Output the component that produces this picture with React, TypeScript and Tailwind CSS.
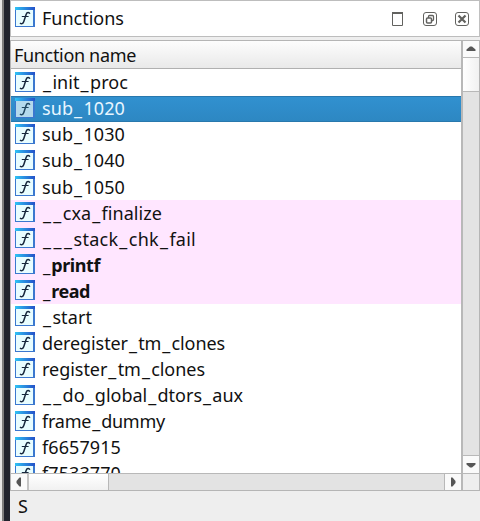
import React from "react";

type Row = { name: string; width: number; kind?: "selected" | "library" | "import" };

const rows: Row[] = [
  { name: "_init_proc", width: 86 },
  { name: "sub_1020", width: 83, kind: "selected" },
  { name: "sub_1030", width: 83 },
  { name: "sub_1040", width: 83 },
  { name: "sub_1050", width: 83 },
  { name: "__cxa_finalize", width: 120, kind: "library" },
  { name: "___stack_chk_fail", width: 154, kind: "library" },
  { name: "_printf", width: 58, kind: "import" },
  { name: "_read", width: 48, kind: "import" },
  { name: "_start", width: 50 },
  { name: "deregister_tm_clones", width: 183 },
  { name: "register_tm_clones", width: 163 },
  { name: "__do_global_dtors_aux", width: 201 },
  { name: "frame_dummy", width: 123 },
  { name: "f6657915", width: 79 },
  { name: "f7533770", width: 79 },
];

function FunctionIcon({ selected = false }: { selected?: boolean }) {
  return (
    <svg width="20" height="20" viewBox="0 0 20 20" className="block shrink-0">
      <defs>
        <linearGradient id="icon-bar" x1="0" x2="1" y1="0" y2="0">
          <stop offset="0" stopColor="#2fc4f5" />
          <stop offset="1" stopColor="#2450c8" />
        </linearGradient>
      </defs>
      <rect width="20" height="20" fill="#3b78cf" />
      <rect width="20" height="3" fill="url(#icon-bar)" />
      <rect x="1" y="3" width="17" height="16" fill={selected ? "#b3d9ec" : "#e8fdff"} />
      <g fill="none" stroke={selected ? "#1f4660" : "#17283d"}>
        <path d="M14.8 6.8C14.2 5 12 5.1 11.2 7.2L8.8 14.6C8.1 16.9 6.4 17.3 5 16" strokeWidth="1.5" />
        <path d="M6.8 9.5H13.6" strokeWidth="1" />
      </g>
    </svg>
  );
}

function FittedText({ text, width }: { text: string; width: number }) {
  const ref = React.useRef<HTMLSpanElement>(null);
  const [spacing, setSpacing] = React.useState(0);
  React.useLayoutEffect(() => {
    if (ref.current) setSpacing((width - ref.current.getBoundingClientRect().width) / text.length);
  }, [text, width]);
  return (
    <span ref={ref} className="inline-block whitespace-pre" style={{ letterSpacing: spacing }}>
      {text.split(/(_)/).map((part, i) =>
        part === "_" ? <span key={i} className="ml-[1px] mr-[1.3px]">_</span> : part
      )}
    </span>
  );
}

function Arrow({ direction }: { direction: "up" | "down" | "left" | "right" }) {
  const paths = {
    up: "M0.5 7V5.5L4 2.5H6L9.5 5.5V7Z",
    down: "M0.5 3V4.5L4 7.5H6L9.5 4.5V3Z",
    left: "M7 0.5H5.5L2.5 4V6L5.5 9.5H7Z",
    right: "M3 0.5H4.5L7.5 4V6L4.5 9.5H3Z",
  };
  return (
    <svg width="10" height="10" viewBox="0 0 10 10">
      <path d={paths[direction]} fill="#565656" />
    </svg>
  );
}

function TitleBar() {
  return (
    <header className="flex h-[37px] shrink-0 items-start border border-r-[#c0c0c0] border-[#bdbdbd] bg-white pl-1 pr-[9px]">
      <div className="pt-[6px]"><FunctionIcon /></div>
      <div className="ml-[7px] flex-1 pt-[4px] leading-[26px]"><FittedText text="Functions" width={82} /></div>
      <svg width="80" height="16" viewBox="0 0 80 16" className="mt-[10px]" fill="none" stroke="#62625f">
        <path d="M2.5 1V14.5H12.5V1" />
        <path d="M2 2H13" strokeWidth="2" />
        <rect x="33.5" y="1.5" width="13" height="13" rx="2.5" />
        <rect x="38.5" y="4.5" width="5" height="5" rx="1" strokeWidth="1.3" />
        <rect x="36.5" y="7" width="5" height="5" rx="1" fill="white" strokeWidth="1.5" />
        <rect x="65.5" y="1.5" width="13" height="13" rx="2.5" />
        <path d="M68.5 4.5L75.5 11.5M75.5 4.5L68.5 11.5" strokeWidth="2.2" />
      </svg>
    </header>
  );
}

function FunctionRow({ row }: { row: Row }) {
  const selected = row.kind === "selected";
  const color = selected
    ? "bg-linear-to-b from-[#3191d0] to-[#2d87c2] text-[#e8f6ff] shadow-[inset_0_1px_#2878ad,inset_0_-1px_#2878ad]"
    : row.kind
      ? "bg-[#ffe6ff]"
      : "bg-white";
  return (
    <div className={`flex h-[26.08px] shrink-0 items-start pl-1 ${color} ${row.kind === "import" ? "font-bold" : ""}`}>
      <div className="pt-[2px]"><FunctionIcon selected={selected} /></div>
      <div className="ml-[7px] pt-[0.64px] leading-[25px]"><FittedText text={row.name} width={row.width} /></div>
    </div>
  );
}

export default function App() {
  return (
    <main className="flex h-[521px] w-[480px] overflow-hidden bg-[#eeeeee] font-['Noto_Sans',sans-serif] text-[18px] text-[#111111]">
      <div className="w-[10px] shrink-0 border-l-2 border-[#e5e5e5] bg-[#20232d]"><div className="h-full w-[2px] bg-[#7e7e7e]" /></div>
      <div className="flex min-w-0 flex-1 flex-col">
        <TitleBar />
        <section className="mt-[3px] flex h-[451px] shrink-0 flex-col border border-[#b5b5b5] bg-white">
          <div className="flex min-h-0 flex-1">
            <div className="flex min-w-0 flex-1 flex-col overflow-hidden">
              <div className="mb-[0.6px] h-[28px] shrink-0 border-b border-[#b0b0b0] bg-linear-to-b from-[#fdfdfd] to-[#e9e9e9] pl-[3px] leading-[29px]">
                <FittedText text="Function name" width={122} />
              </div>
              {rows.map((row) => <FunctionRow key={row.name} row={row} />)}
            </div>
            <div className="flex w-[18px] shrink-0 flex-col border-l-2 border-[#b8b8b8] bg-[#e3e3e3]">
              <div className="flex h-[17px] shrink-0 items-center justify-center border-b border-[#b8b8b8] bg-[#fafafa]"><Arrow direction="up" /></div>
              <div className="h-[34px] shrink-0 border-b border-[#b8b8b8] bg-linear-to-r from-white to-[#f1f1f1]" />
              <div className="flex-1" />
              <div className="flex h-[18px] items-center justify-center border-t border-[#b8b8b8] bg-[#fafafa]"><Arrow direction="down" /></div>
            </div>
          </div>
          <div className="flex h-[17px] shrink-0 border-t border-[#b8b8b8] bg-[#e3e3e3]">
            <div className="flex w-[18px] items-center justify-center border-r-2 border-[#c4c4c4] bg-[#fafafa]"><Arrow direction="left" /></div>
            <div className="w-[80px] border-r border-[#b8b8b8] bg-linear-to-b from-white to-[#f1f1f1]" />
            <div className="flex-1" />
            <div className="flex w-[17px] items-center justify-center border-l border-[#b8b8b8] bg-[#fafafa]"><Arrow direction="right" /></div>
            <div className="w-[18px] border-l-2 border-[#b8b8b8] bg-[#eeeeee]" />
          </div>
        </section>
        <footer className="flex-1 pl-2 leading-[31px]">S</footer>
      </div>
    </main>
  );
}
